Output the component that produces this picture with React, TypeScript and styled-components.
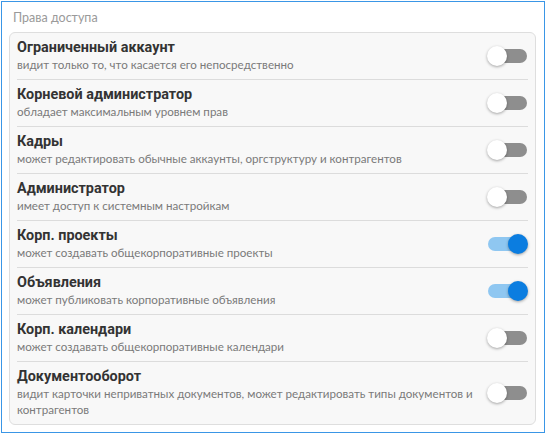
import React from "react";
import styled, { createGlobalStyle } from "styled-components";

const GlobalStyle = createGlobalStyle`
  html, body {
    margin: 0;
    padding: 0;
    background: #ffffff;
  }
  body {
    font-family: "Lato", "Noto Sans", sans-serif;
  }
`;

interface Permission {
  title: string;
  description: string;
  enabled: boolean;
}

const permissions: Permission[] = [
  {
    title: "Ограниченный аккаунт",
    description: "видит только то, что касается его непосредственно",
    enabled: false,
  },
  {
    title: "Корневой администратор",
    description: "обладает максимальным уровнем прав",
    enabled: false,
  },
  {
    title: "Кадры",
    description:
      "может редактировать обычные аккаунты, оргструктуру и контрагентов",
    enabled: false,
  },
  {
    title: "Администратор",
    description: "имеет доступ к системным настройкам",
    enabled: false,
  },
  {
    title: "Корп. проекты",
    description: "может создавать общекорпоративные проекты",
    enabled: true,
  },
  {
    title: "Объявления",
    description: "может публиковать корпоративные объявления",
    enabled: true,
  },
  {
    title: "Корп. календари",
    description: "может создавать общекорпоративные календари",
    enabled: false,
  },
  {
    title: "Документооборот",
    description:
      "видит карточки неприватных документов, может редактировать типы документов и контрагентов",
    enabled: false,
  },
];

const Frame = styled.section`
  box-sizing: border-box;
  width: 544px;
  height: 432px;
  margin: 1px 0 0 1px;
  border: 1px solid #3a96e6;
  padding: 0 8px 0 7px;
  display: flex;
  flex-direction: column;
`;

const Legend = styled.div`
  height: 30px;
  display: flex;
  align-items: center;
  padding: 0 4px;
  font-size: 12.5px;
  color: #9a9a9a;
`;

const Card = styled.div`
  box-sizing: border-box;
  background: #f8f8f8;
  border: 1px solid #dedede;
  border-radius: 6px;
  padding: 0 7px;
  display: flex;
  flex-direction: column;
`;

const Row = styled.div`
  display: flex;
  align-items: center;
  gap: 4px;
  padding: 6px 0;
  border-bottom: 1px solid #dcdcdc;

  &:last-child {
    border-bottom: none;
  }
`;

const Texts = styled.div`
  flex: 1;
  min-width: 0;
  display: flex;
  flex-direction: column;
`;

const Title = styled.div`
  font-family: "Roboto", "Lato", sans-serif;
  font-size: 14.4px;
  line-height: 18px;
  font-weight: 700;
  color: #333333;
`;

const Description = styled.div`
  font-size: 11.6px;
  line-height: 16px;
  color: #7a7a7a;
`;

const SwitchRoot = styled.div`
  position: relative;
  flex: none;
  width: 41px;
  height: 20px;
`;

const Track = styled.div<{ $on: boolean }>`
  position: absolute;
  left: 1px;
  right: 1px;
  top: 3px;
  height: 14px;
  border-radius: 7px;
  background: ${(p) => (p.$on ? "#8fc7f1" : "#8e8e8e")};
`;

const Thumb = styled.div<{ $on: boolean }>`
  position: absolute;
  top: 0;
  left: ${(p) => (p.$on ? "21px" : "0")};
  width: 20px;
  height: 20px;
  border-radius: 50%;
  background: ${(p) => (p.$on ? "#0b7de0" : "#ffffff")};
  box-shadow: 0 1px 3px rgba(0, 0, 0, 0.35);
`;

const Switch: React.FC<{ on: boolean }> = ({ on }) => (
  <SwitchRoot>
    <Track $on={on} />
    <Thumb $on={on} />
  </SwitchRoot>
);

export default function App() {
  return (
    <>
      <GlobalStyle />
      <Frame>
        <Legend>Права доступа</Legend>
        <Card>
          {permissions.map((p) => (
            <Row key={p.title}>
              <Texts>
                <Title>{p.title}</Title>
                <Description>{p.description}</Description>
              </Texts>
              <Switch on={p.enabled} />
            </Row>
          ))}
        </Card>
      </Frame>
    </>
  );
}
